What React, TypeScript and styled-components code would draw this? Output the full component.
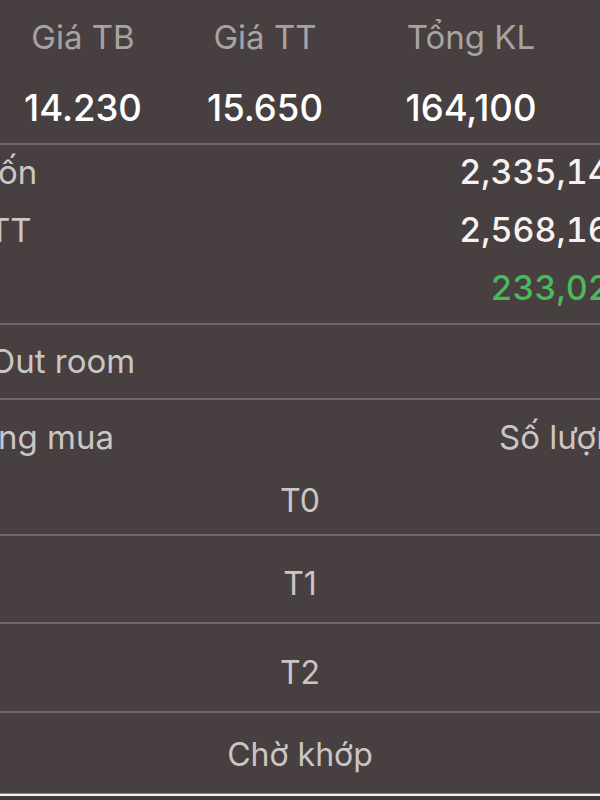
import React from 'react';
import styled, { createGlobalStyle } from 'styled-components';

const Global = createGlobalStyle`
  html, body {
    margin: 0;
    padding: 0;
    background: #473f40;
    overflow: hidden;
  }
  body {
    font-family: Inter, Roboto, "Noto Sans", "Liberation Sans", sans-serif;
  }
`;

const Screen = styled.div`
  width: 600px;
  height: 800px;
  overflow: hidden;
  background: #473f40;
  display: flex;
  flex-direction: column;
  white-space: nowrap;
`;

const Summary = styled.div`
  display: grid;
  grid-template-columns: 166px 198px 214px;
  grid-template-rows: 74px 69px;
  align-items: center;
  justify-items: center;
`;

const HeadLabel = styled.div`
  font-size: 33px;
  line-height: 1;
  color: #a8a3a3;
`;

const HeadValue = styled.div`
  font-size: 36.5px;
  font-weight: 500;
  line-height: 1;
  color: #ffffff;
`;

const Divider = styled.div`
  height: 2px;
  flex: none;
  background: #6e6768;
`;

const MoneyBlock = styled.div`
  display: flex;
  flex-direction: column;
  margin-top: -2px;
  padding-bottom: 6px;
`;

const MoneyRow = styled.div`
  height: 58px;
  display: flex;
  align-items: center;
  justify-content: space-between;
  margin-right: -107px;
`;

const Label = styled.span<{ $cut?: number }>`
  font-size: 33px;
  line-height: 1;
  color: #cbc6c6;
  margin-left: ${(p) => -(p.$cut ?? 0)}px;
`;

const Money = styled.span<{ $tone?: 'up' | 'plain' }>`
  font-size: 34px;
  font-weight: 500;
  line-height: 1;
  font-variant-numeric: tabular-nums;
  color: ${(p) => (p.$tone === 'up' ? '#4cb95b' : '#f6f2f2')};
`;

const RoomRow = styled.div`
  height: 73px;
  display: flex;
  align-items: center;
`;

const OrderHead = styled.div`
  height: 74px;
  display: grid;
  grid-template-columns: 499px 1fr;
  align-items: center;
`;

const SlotRow = styled.div<{ $h: number; $top?: number; $bottom?: number }>`
  height: ${(p) => p.$h}px;
  box-sizing: border-box;
  padding-top: ${(p) => p.$top ?? 0}px;
  padding-bottom: ${(p) => p.$bottom ?? 0}px;
  display: flex;
  align-items: center;
  justify-content: center;
  flex: none;
`;

const SlotText = styled.span`
  font-size: 32px;
  line-height: 1;
  color: #cbc6c6;
`;

const BottomBar = styled.div`
  flex: 1;
  border-top: 1px solid #8a8485;
  box-shadow: inset 0 2px 0 #f2efef;
  background: #3f3839;
`;

const heads = [
  { label: 'Giá TB', value: '14.230' },
  { label: 'Giá TT', value: '15.650' },
  { label: 'Tổng KL', value: '164,100' },
];

const money = [
  { label: 'ốn', cut: 2, value: '2,335,143,000', tone: 'plain' as const },
  { label: 'TT', cut: 11, value: '2,568,165,000', tone: 'plain' as const },
  { label: '', cut: 0, value: '233,022,000', tone: 'up' as const },
];

export default function App() {
  return (
    <>
      <Global />
      <Screen>
        <Summary>
          {heads.map((h) => (
            <HeadLabel key={h.label}>{h.label}</HeadLabel>
          ))}
          {heads.map((h) => (
            <HeadValue key={h.value}>{h.value}</HeadValue>
          ))}
        </Summary>
        <Divider />
        <MoneyBlock>
          {money.map((m) => (
            <MoneyRow key={m.value}>
              <Label $cut={m.cut}>{m.label}</Label>
              <Money $tone={m.tone}>{m.value}</Money>
            </MoneyRow>
          ))}
        </MoneyBlock>
        <Divider />
        <RoomRow>
          <Label $cut={10}>Out room</Label>
        </RoomRow>
        <Divider />
        <OrderHead>
          <Label $cut={2}>ng mua</Label>
          <Label>Số lượng</Label>
        </OrderHead>
        <SlotRow $h={60} $bottom={6}>
          <SlotText>T0</SlotText>
        </SlotRow>
        <Divider />
        <SlotRow $h={86} $top={10}>
          <SlotText>T1</SlotText>
        </SlotRow>
        <Divider />
        <SlotRow $h={87} $top={10}>
          <SlotText>T2</SlotText>
        </SlotRow>
        <Divider />
        <SlotRow $h={80} $top={3}>
          <SlotText>Chờ khớp</SlotText>
        </SlotRow>
        <BottomBar />
      </Screen>
    </>
  );
}
